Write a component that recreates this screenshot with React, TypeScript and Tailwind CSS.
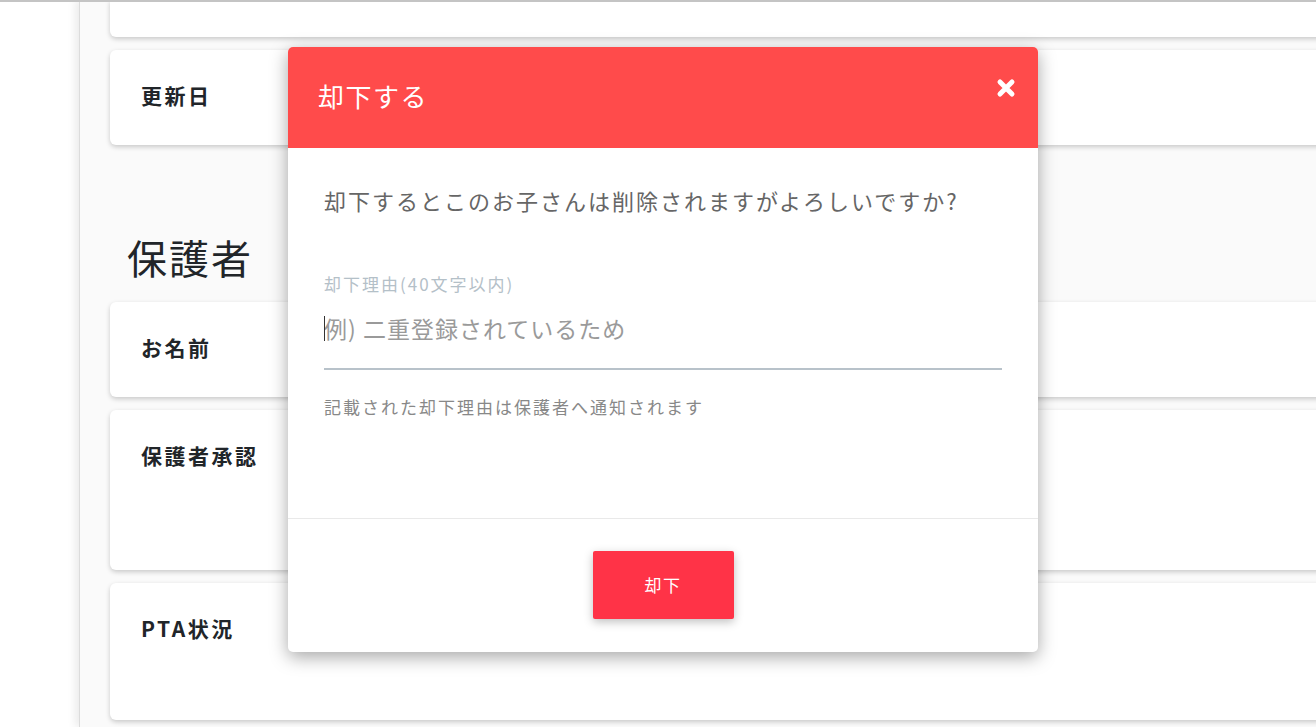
import React from "react";

const font = { fontFamily: '"Noto Sans CJK JP", "Noto Sans", sans-serif' };

function Card({ label, h, className = "" }: { label?: string; h: string; className?: string }) {
  return (
    <div
      className={`w-[1240px] bg-white rounded-[6px] shadow-[0_2px_5px_rgba(0,0,0,0.2)] pl-[31px] pt-[31px] ${h} ${className}`}
    >
      {label && (
        <div className="text-[21px] leading-[28px] font-bold tracking-[2.5px] text-[#212529]">{label}</div>
      )}
    </div>
  );
}

export default function App() {
  return (
    <div className="relative w-[1316px] h-[727px] overflow-hidden bg-white" style={font}>
      <div className="absolute top-0 left-0 right-0 h-[2px] bg-[#c4c4c4] z-10" />
      <div className="flex h-full">
        <div className="w-[79px] shrink-0 bg-white" />
        <div className="flex-1 bg-[#fafafa] border-l border-[#dcdcdc] shadow-[-4px_0_8px_rgba(0,0,0,0.08)] pl-[30px] flex flex-col">
          <div className="w-[1240px] h-[37px] bg-white rounded-b-[6px] shadow-[0_2px_5px_rgba(0,0,0,0.2)]" />
          <Card label="更新日" h="h-[95px]" className="mt-[13px]" />
          <div className="mt-[88px] h-[48px] leading-[48px] text-[40px] tracking-[2px] text-[#212529] ml-[17px]">保護者</div>
          <Card label="お名前" h="h-[95px]" className="mt-[21px]" />
          <Card label="保護者承認" h="h-[160px]" className="mt-[13px]" />
          <Card label="PTA状況" h="h-[137px]" className="mt-[13px]" />
        </div>
      </div>

      {/* Modal */}
      <div className="absolute left-[288px] top-[47px] w-[750px] h-[605px] bg-white rounded-[5px] shadow-[0_5px_18px_rgba(0,0,0,0.35)] flex flex-col overflow-hidden">
        <div className="h-[101px] bg-[#ff4b4b] flex items-center justify-between pl-[30px] pr-[22px]">
          <div className="text-white text-[26px] tracking-[1.5px] leading-[36px] -mt-[3px]">却下する</div>
          <svg width="20" height="20" viewBox="0 0 20 20" className="-mt-[20px]">
            <path d="M4 4 L16 16 M16 4 L4 16" stroke="white" strokeWidth="5" strokeLinecap="round" />
          </svg>
        </div>
        <div className="h-[370px] px-[36px] flex flex-col">
          <div className="mt-[36px] text-[22px] leading-[32px] tracking-[2px] text-[#666666]">
            却下するとこのお子さんは削除されますがよろしいですか?
          </div>
          <div className="mt-[56px] text-[17px] leading-[24px] tracking-[2px] text-[#b4c0c8]">却下理由(40文字以内)</div>
          <div className="mt-[16px] h-[58px] border-b-2 border-[#b8c2ca] relative">
            <div className="text-[23px] leading-[32px] tracking-[1px] text-[#9a9a9a]">例) 二重登録されているため</div>
            <div className="absolute left-0 top-[4px] w-px h-[25px] bg-[#333]" />
          </div>
          <div className="mt-[25px] text-[17px] leading-[24px] tracking-[2px] text-[#888888]">
            記載された却下理由は保護者へ通知されます
          </div>
        </div>
        <div className="border-t border-[#e9e9e9] flex-1 flex justify-center pt-[32px]">
          <div className="w-[141px] h-[68px] bg-[#ff3347] rounded-[2px] shadow-[0_3px_10px_rgba(0,0,0,0.25)] flex items-center justify-center text-white text-[17px] tracking-[1.5px]">
            却下
          </div>
        </div>
      </div>
    </div>
  );
}
